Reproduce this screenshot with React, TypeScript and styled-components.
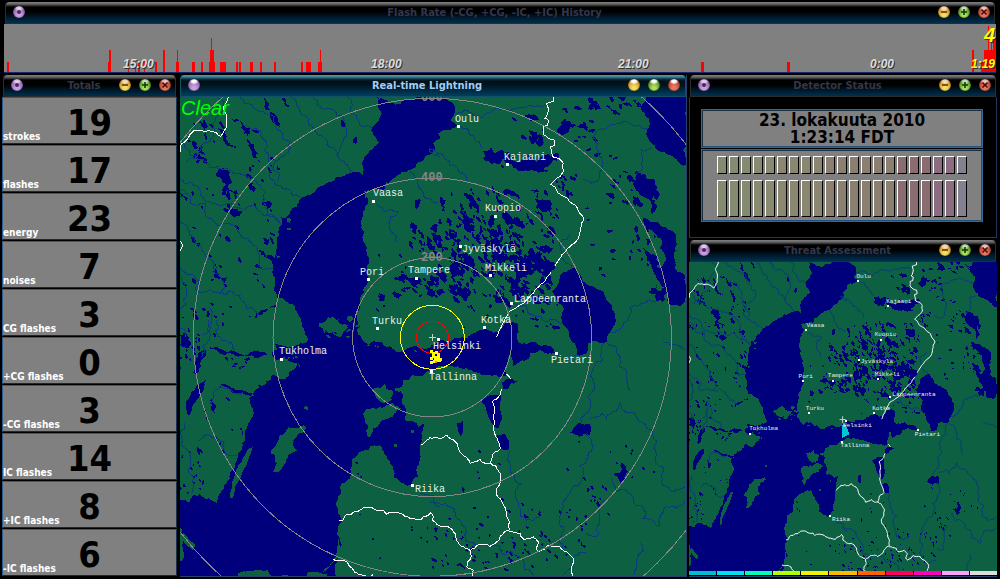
import React from 'react';
import styled, { createGlobalStyle, css } from 'styled-components';

/* ---------- theme values ---------- */
const UI = '"DejaVu Sans Condensed", "DejaVu Sans", sans-serif';
const LAND = '#0d6042';
const WATER = '#00007c';
const RIVER = '#083c7c';
const PANEL = '#808080';

const GlobalStyle = createGlobalStyle`
  * { box-sizing: border-box; }
  html, body { margin: 0; background: #000; }
  body { font-family: ${UI}; color: #000; }
  h1, h2, p, dl, dt, dd { margin: 0; font: inherit; }
`;

/* ---------- map geometry (map space is 1518 x 1437) ---------- */
type Pt = [number, number];
const MAP_W = 1518;
const MAP_H = 1437;

let seed = 20101023;
const rnd = () => {
  seed = (seed + 0x6d2b79f5) | 0;
  let t = Math.imul(seed ^ (seed >>> 15), 1 | seed);
  t = (t + Math.imul(t ^ (t >>> 7), 61 | t)) ^ t;
  return ((t ^ (t >>> 14)) >>> 0) / 4294967296;
};

// The survey sheets: each has its own origin in map space.
const NW: Pt = [0, -66];
const NE: Pt = [750, -66];
const SW: Pt = [0, 669];
const SE: Pt = [750, 669];

const pts = (origin: Pt, text: string): Pt[] =>
  text.trim().split(/\s+/).map((p) => {
    const [x, y] = p.split(',').map(Number);
    return [x + origin[0], y + origin[1]];
  });

const split = (a: Pt, b: Pt, k: number, out: Pt[]) => {
  const dx = b[0] - a[0];
  const dy = b[1] - a[1];
  const len = Math.hypot(dx, dy);
  if (len > 9) {
    const d = (rnd() - 0.5) * k;
    const m: Pt = [(a[0] + b[0]) / 2 - dy * d, (a[1] + b[1]) / 2 + dx * d];
    split(a, m, k, out);
    split(m, b, k, out);
  } else out.push(b);
};

const rough = (line: Pt[], k: number, closed: boolean) => {
  const out: Pt[] = [line[0]];
  for (let i = 1; i < line.length; i++) split(line[i - 1], line[i], k, out);
  if (closed) split(line[line.length - 1], line[0], k, out);
  return 'M' + out.map((p) => `${Math.round(p[0])} ${Math.round(p[1])}`).join('L') + (closed ? 'Z' : '');
};

const area = (o: Pt, t: string, k = 0.5) => rough(pts(o, t), k, true);
const line = (o: Pt, t: string, k = 0.5) => rough(pts(o, t), k, false);

const sea = rough(
  [
    ...pts(NW, '588,60 592,90 605,115 595,140 572,160 585,185 597,205 580,220 560,240 545,265 550,300 530,290 500,298 470,305 440,325 410,340 385,360 360,372 350,395 330,410 318,430 302,425 305,450 298,480 290,510 282,550 278,580 285,620 285,650 292,670 320,680 345,695 355,720 365,745'),
    ...pts(SW, '375,45 385,60 355,75 325,85 300,75 287,70 290,90 275,100 290,120 330,125 355,132 330,155 300,178 275,165 260,190 235,205 208,235 213,260 205,310 195,350 185,390 172,415 160,450 140,490 110,548 75,535 40,525 30,545 0,540 -20,780 480,780 478,710 472,640 473,580 475,530 485,490 510,475 515,440 535,400 560,390 600,375 615,405 640,445 642,475 665,490 690,495 715,470 720,420 720,375 728,330 737,308 715,320 700,305 680,305 678,275 665,240 665,200 670,180 700,165 740,155'),
    ...pts(SE, '10,148 70,140 110,145 150,160 200,165 228,168 230,140 240,105 250,140 265,130 290,120 300,100 330,90 360,100 380,103 370,85 350,75 320,70 290,72 262,60 260,10 235,5 215,25 190,40 155,30 130,40 90,55 30,60'),
    ...pts(SW, '755,75 720,85 650,95 620,80 600,65 545,55 530,30'),
    ...pts(NW, '540,755 530,720 540,690 545,660 565,620 560,580 560,540 550,500 545,450 550,410 565,380 555,360 575,345 610,345 640,310 665,290 700,280 720,260 745,240 765,215'),
    ...pts(NE, '10,205 30,190 25,175 60,165 82,152 62,135 75,110 70,85 40,70 30,55'),
  ],
  0.4,
  true,
);

const bigWater = [
  sea,
  area(NE, '380,635 390,600 410,590 435,580 460,620 490,635 520,650 545,690 557,740 550,755 530,800 510,805 490,797 475,805 470,835 440,838 435,805 415,765 395,740 402,700 380,680 365,650', 0.3),
  area(NE, '650,60 632,100 658,130 655,160 665,205 690,230 720,240 745,262 780,285 780,60', 0.4),
  area(NE, '640,430 680,440 730,470 740,510 735,580 765,620 765,680 750,695 720,690 705,650 680,610 665,570 650,545 640,520 665,540 690,580 706,560 690,520 692,490 660,465', 0.4),
  area(NE, '620,300 650,310 680,340 690,380 672,360 675,410 662,425 650,370 625,350', 0.7),
  area(NE, '160,228 180,218 200,232 222,228 225,250 205,268 180,262', 0.7),
  area(NE, '225,232 270,262 320,262 345,240 385,235 360,270 320,288 260,284 225,265', 0.6),
  area(NE, '265,545 300,535 340,555 350,580 310,595 290,610 260,590', 0.9),
  area(NE, '330,590 370,560 375,580 350,610', 0.7),
  area(NE, '230,600 270,610 300,640 280,660 240,640', 0.9),
  area(NE, '180,500 195,480 215,520 225,560 205,570 190,540', 0.9),
  area(NE, '60,480 85,500 100,560 90,600 70,560', 0.9),
  area(NE, '380,165 420,140 460,142 490,165 450,160 420,155 400,180', 0.8),
  area(NE, '300,345 330,375 365,400 375,435 350,410 320,390', 0.8),
  area(NE, '655,650 710,648 705,670 680,682', 0.9),
  area(SE, '152,240 180,225 213,226 215,300 205,325 190,320 175,290 165,258', 0.15),
  area(SE, '200,345 222,342 238,365 235,390 215,388 203,365', 0.2),
  area(SE, '215,190 230,178 262,185 240,195 235,206 218,203', 0.6),
  area(SE, '420,338 450,308 478,312 480,345 462,340 448,352', 0.3),
  area(SE, '82,310 98,302 100,325 92,348 84,330', 0.3),
  area(SE, '552,465 570,460 572,430 580,430 586,480 572,490', 0.4),
  area(SW, '20,280 18,250 35,215 60,190 78,178 72,200 55,235 38,255 28,285', 0.3),
  area(SW, '85,84 110,80 140,96 175,100 225,92 258,98 262,106 215,106 175,110 120,102', 0.4),
  area(SW, '55,100 75,86 78,100 62,120 50,160 40,158 45,130', 0.4),
  area(SW, '110,202 150,200 195,212 222,226 190,221 150,208', 0.4),
  area(SW, '90,240 99,238 106,280 95,272', 0.5),
  area(SW, '0,45 24,55 32,75 18,85 0,75', 0.6),
  area(NW, '108,272 130,280 145,300 146,340 170,345 180,362 160,355 150,345 142,370 128,340 124,310', 0.7),
  area(NW, '105,565 112,595 140,605 130,628 112,610 100,590', 0.7),
  area(NW, '152,130 190,150 210,175 205,195 225,225 240,262 220,250 200,200 190,165', 0.6),
  area(NW, '200,722 240,710 290,690 285,700 245,720 215,728', 0.6),
  area(NW, '155,400 185,408 178,425 160,425', 0.9),
  area(NW, '245,370 272,395 268,400 245,390', 0.9),
  area(NW, '245,66 270,110 300,160 285,145 255,100', 0.6),
  area(NW, '305,66 335,90 325,96', 0.6),
  area(NW, '115,160 140,185 160,215 150,212 130,185', 0.6),
  area(NW, '20,195 50,205 75,240 60,235 40,215', 0.8),
  area(NW, '30,475 60,505 55,515 35,495', 0.7),
  area(NW, '0,355 25,370 20,378 0,368', 0.7),
  area(NW, '250,490 268,492 262,512 252,506', 0.6),
  area(NW, '482,135 492,142 492,158 484,152', 0.6),
  area(NW, '522,190 532,186 530,205 520,204', 0.6),
  area(NW, '598,645 614,660 610,680 600,670', 0.6),
  area(NW, '704,375 718,372 718,395 708,402', 0.6),
].join('');

const islands = [
  area(SW, '418,10 445,-8 465,-5 480,10 505,25 490,35 475,50 460,35 440,32', 0.9),
  area(SW, '500,-5 515,-12 520,0 510,10', 0.9),
  area(SW, '325,322 360,322 372,316 380,325 352,345 340,360 340,378 350,392 325,405 312,432 295,457 280,455 290,430 285,405 272,403 288,375 300,345', 0.3),
  area(SW, '208,383 218,382 212,400 190,450 175,485 157,535 150,532 158,480 185,425', 0.15),
  area(SW, '555,270 600,262 640,250 665,265 640,290 600,310 580,325 570,352 560,345 565,320 552,290', 0.4),
  area(SW, '575,208 600,205 615,192 640,215 635,240 610,250 590,235', 0.4),
  area(SW, '645,205 662,202 660,218 646,214', 0.4),
  area(SW, '372,260 384,260 384,270 374,268', 0.2),
  area(SW, '642,372 650,372 650,380 642,380', 0.2),
  area(SW, '694,330 702,330 702,338 694,338', 0.2),
  area(SW, '165,780 175,760 210,752 262,750 290,780', 0.2),
  area(SW, '380,780 384,756 415,756 440,762 445,780', 0.2),
  area(SW, '10,640 22,650 45,675 38,692 15,672', 0.2),
  area(SW, '425,758 450,735 468,710 476,655 480,690 495,780 478,760 476,712 460,725 438,752', 0.1),
  area(NW, '552,348 566,345 575,355 568,372 555,368', 0.6),
  area(NW, '288,540 305,545 292,550', 0.3),
  area(NW, '322,430 335,432 330,445 322,440', 0.3),
  area(NW, '322,458 332,458 332,464 322,464', 0.3),
].join('');

/* cluster: x0, y0, x1, y1, count, min size, max size, tilt in degrees */
type Cluster = [Pt, number, number, number, number, number, number, number, number];

const blobs = (clusters: Cluster[]) => {
  let d = '';
  for (const [o, x0, y0, x1, y1, n, s0, s1, tilt] of clusters) {
    for (let i = 0; i < n; i++) {
      const cx = o[0] + x0 + rnd() * (x1 - x0);
      const cy = o[1] + y0 + rnd() * (y1 - y0);
      const r = (s0 + rnd() * rnd() * (s1 - s0)) / 2;
      const a0 = ((tilt + (rnd() - 0.5) * 60) * Math.PI) / 180;
      const flat = 0.25 + rnd() * 0.35;
      const ring: Pt[] = [];
      for (let k = 0; k < 8; k++) {
        const a = (k / 8) * Math.PI * 2;
        const rr = r * (0.55 + rnd() * 0.6);
        const px = Math.cos(a) * rr;
        const py = Math.sin(a) * Math.max(rr * flat, 3);
        ring.push([cx + px * Math.cos(a0) - py * Math.sin(a0), cy + px * Math.sin(a0) + py * Math.cos(a0)]);
      }
      d += rough(ring, 0.9, true);
    }
  }
  return d;
};

const lakes = blobs([
  [NE, 30, 340, 210, 500, 46, 12, 60, 65],
  [NE, 90, 430, 260, 560, 60, 12, 66, 75],
  [NE, 60, 540, 360, 690, 112, 12, 62, 60],
  [NE, 200, 460, 370, 560, 28, 12, 50, 50],
  [NE, 0, 470, 100, 660, 34, 12, 50, 40],
  [NW, 690, 450, 780, 540, 22, 10, 44, 60],
  [NW, 640, 590, 780, 665, 28, 10, 50, 20],
  [NE, 190, 340, 400, 470, 20, 10, 60, 50],
  [NE, 380, 300, 440, 370, 14, 10, 44, 60],
  [NE, 540, 290, 630, 400, 20, 10, 60, 40],
  [NE, 600, 450, 680, 570, 20, 10, 50, 70],
  [NE, 400, 80, 500, 200, 12, 10, 50, 10],
  [NE, 450, 66, 640, 120, 14, 10, 60, 40],
  [NE, 250, 85, 345, 205, 12, 10, 60, 50],
  [NE, 440, 220, 560, 250, 5, 10, 44, 0],
  [NE, 470, 400, 560, 620, 9, 10, 40, 0],
  [NE, 230, 640, 420, 760, 14, 8, 34, 20],
  [NE, 100, 690, 200, 760, 8, 8, 24, 60],
  [NE, 170, 240, 370, 290, 12, 8, 40, 20],
  [NW, 570, 540, 680, 720, 8, 8, 28, 60],
  [NW, 0, 130, 260, 400, 28, 10, 54, 55],
  [NW, 0, 400, 280, 720, 28, 10, 40, 40],
  [NW, 240, 225, 310, 290, 5, 10, 40, 60],
  [SW, 0, -20, 160, 60, 14, 8, 36, 60],
  [SW, 0, 60, 60, 170, 14, 8, 30, 60],
  [SW, 110, 110, 270, 200, 12, 8, 34, 20],
  [SW, 70, 230, 200, 400, 9, 8, 24, 60],
  [SW, 0, 390, 70, 530, 22, 8, 26, 80],
  [SW, 520, 410, 580, 470, 3, 8, 24, 60],
  [SW, 530, 570, 780, 760, 8, 8, 16, 60],
  [SE, 0, 560, 230, 760, 44, 8, 28, 50],
  [SE, 230, 540, 380, 740, 34, 8, 24, 50],
  [SE, 380, 570, 470, 720, 14, 8, 30, 60],
  [SE, 470, 490, 540, 590, 12, 8, 28, 60],
  [SE, 300, 360, 700, 480, 12, 8, 22, 60],
  [SE, 0, 380, 220, 560, 8, 8, 24, 60],
]);

const skerries = blobs([
  [SW, 430, 10, 560, 55, 22, 8, 24, 20],
  [SW, 300, 85, 360, 160, 12, 7, 16, 40],
  [SW, 535, 40, 720, 95, 16, 7, 18, 10],
  [NE, 120, 560, 340, 680, 16, 7, 18, 60],
]);

const rivers = [
  line(NW, '330,66 350,90 380,125 400,160 440,195 470,230 480,255 520,290'),
  line(NW, '400,66 440,100 470,120 485,205 470,240'),
  line(NW, '500,66 510,105 540,150 575,165'),
  line(NW, '180,66 215,90 240,110 300,165 330,200 320,235 285,260 270,290 290,330 330,345 360,370'),
  line(NW, '200,150 260,200 265,250 300,300 290,320'),
  line(NW, '0,190 30,240 80,260 140,280 190,300 240,330 250,380 260,420 300,445'),
  line(NW, '0,310 40,330 70,370 130,390 180,400 240,410 302,450'),
  line(NW, '0,345 30,380 75,385 85,430 120,450 160,450 200,490 230,520 235,570 280,580'),
  line(NW, '0,440 40,490 70,530 100,560 130,620 125,655'),
  line(NW, '0,575 50,650 120,655 180,660 200,700 235,720'),
  line(NW, '0,600 20,650 15,780'),
  line(NW, '90,700 95,740 65,780'),
  line(NW, '20,260 90,200 130,90 110,66'),
  line(NW, '590,385 655,410 630,450 650,500'),
  line(NW, '690,290 720,340 755,375 775,385'),
  line(NW, '750,220 780,245'),
  line(NE, '85,155 130,180 160,220'),
  line(NE, '75,115 130,120 180,115 240,110 300,90 350,85'),
  line(NE, '0,225 50,255 100,295 110,320'),
  line(NE, '490,190 530,160 555,148 650,162'),
  line(NE, '490,190 505,240 510,300 485,325 460,312'),
  line(NE, '665,220 635,225 635,270 620,300'),
  line(NE, '420,478 390,500 395,530 425,580'),
  line(NE, '540,770 600,700 640,685 680,680'),
  line(NE, '250,685 300,720 350,740 400,745'),
  line(SE, '520,70 520,120 490,180 480,250 452,295 455,310'),
  line(SE, '530,70 570,110 590,160 600,212'),
  line(SE, '480,295 515,280 530,300 570,250 620,290 665,330 675,420 695,470 720,510 765,500'),
  line(SE, '470,340 475,400 455,480 420,520 400,560 400,620 385,660 400,690'),
  line(SE, '238,390 240,450 275,490 270,570 290,600 330,590'),
  line(SE, '545,475 560,515 600,520 640,570 640,595 690,615 710,560 765,545'),
  line(SE, '525,540 510,600 500,650 470,640'),
  line(SE, '0,545 60,560 90,600 105,660 160,672 210,680 220,705 280,720 310,765'),
  line(SE, '700,65 740,75 765,90'),
  line(SE, '630,670 640,690 620,720 615,765'),
  line(SE, '470,700 430,720 400,765'),
  line(SE, '380,100 410,120 440,103'),
  line(SW, '720,520 780,560'),
  line(SW, '55,362 70,345 120,360 135,395 170,405'),
  line(SW, '90,250 100,215 140,205 190,215'),
  line(SW, '110,0 125,60 165,90'),
  line(SW, '15,310 5,370 30,420 35,520'),
  line(SW, '65,110 90,60 85,0'),
].join('');

const borders = [
  line(NE, '370,60 370,80 350,85 355,100 345,130 355,135 352,152 340,155 342,180 355,190 372,195 375,210 362,215 368,245 385,250 400,265 400,290 390,305 362,328 385,355 415,375 440,395 462,432 450,465 445,490 420,515 405,532 375,572', 0.2),
  line(NE, '362,592 330,630 310,655 270,690 230,725 215,755 200,785', 0.2),
  line(SE, '230,163 242,177', 0.2),
  line(SE, '215,208 210,225 187,245 192,300 190,325 205,365 212,385 190,400 180,430', 0.2),
  line(SW, '725,375 735,365 750,352 785,355 800,345 835,385 870,430 900,418 915,430 935,432 963,465 960,490 950,525 968,550 980,590 987,630 945,670 930,680 895,675 870,692 860,740 880,750 875,775', 0.3),
  line(SW, '478,603 490,600 500,583 550,563 600,573 612,572 620,583 660,580 690,595 720,600 730,590 752,578 760,605 775,616 800,618 825,640 845,680 870,692', 0.3),
  line(SE, '237,635 270,640 280,657 310,650 325,665 318,685 328,695 355,675 390,680 410,695 428,712 425,740 430,775', 0.3),
  line(SW, '458,717 490,720 510,740 545,765 580,763', 0.3),
  line(NW, '145,66 130,95 140,130 138,160 122,185 90,168 45,165 20,195 2,212 0,230', 0.2),
  line(NW, '0,497 8,512 0,528', 0.1),
].join('');

interface City { name: string; dot: Pt; label: Pt }
// Pixel positions on a 506 x 479 sheet; labels give left edge and baseline.
const cities: City[] = [
  { name: 'Oulu', dot: [278, 29], label: [275, 26] },
  { name: 'Kajaani', dot: [327, 67], label: [324, 64] },
  { name: 'Vaasa', dot: [193, 104], label: [193, 100] },
  { name: 'Kuopio', dot: [315, 119], label: [305, 115] },
  { name: 'Jyväskylä', dot: [280, 149], label: [282, 156] },
  { name: 'Tampere', dot: [236, 181], label: [228, 177] },
  { name: 'Mikkeli', dot: [310, 178], label: [305, 175] },
  { name: 'Lappeenranta', dot: [331, 206], label: [334, 206] },
  { name: 'Pori', dot: [188, 182], label: [180, 179] },
  { name: 'Turku', dot: [197, 231], label: [192, 228] },
  { name: 'Kotka', dot: [304, 230], label: [301, 227] },
  { name: 'Tukholma', dot: [101, 262], label: [99, 258] },
  { name: 'Helsinki', dot: [258, 242], label: [253, 253] },
  { name: 'Tallinna', dot: [251, 274], label: [249, 284] },
  { name: 'Pietari', dot: [376, 256], label: [371, 267] },
  { name: 'Riika', dot: [232, 388], label: [235, 396] },
];

const strikes: Pt[] = [
  [751, 760], [757, 766], [766, 763], [770, 768], [755, 774], [763, 776], [771, 778], [761, 783], [767, 786],
  [751, 791], [758, 789], [774, 787], [751, 779], [776, 783],
];

const MapBox = styled.div`
  position: relative;
  flex: 1 1 0;
  min-height: 0;
  overflow: hidden;
  background: ${LAND};
`;

const Chart = styled.svg`
  position: absolute;
  inset: 0;
  width: 100%;
  height: 100%;
  display: block;
  shape-rendering: crispEdges;

  path, circle { vector-effect: non-scaling-stroke; }
`;

const MapLabel = styled.span<{ $small?: boolean }>`
  position: absolute;
  color: #e8f0e8;
  font: ${(p) => (p.$small ? 6 : 10)}px/1 'Liberation Mono', monospace;
  margin-top: ${(p) => (p.$small ? -5 : -8)}px;
  white-space: pre;
`;

const Dot = styled.i<{ $small?: boolean }>`
  position: absolute;
  width: ${(p) => (p.$small ? 2 : 3)}px;
  height: ${(p) => (p.$small ? 2 : 3)}px;
  margin: -1px 0 0 -1px;
  background: #fff;
`;

const RangeLabel = styled.span`
  position: absolute;
  margin-top: -10px;
  color: #868686;
  font: bold 12px/1 'Liberation Mono', monospace;
`;

const Warning = styled.strong`
  position: absolute;
  left: 1px;
  top: 1px;
  color: #00ff00;
  font: italic 500 20px/20px 'Liberation Sans', Arial, sans-serif;
`;

const pct = (v: number, of: number) => `${(v / of) * 100}%`;

function LightningMap({ small }: { small?: boolean }) {
  return (
    <>
      <Chart viewBox={`0 0 ${MAP_W} ${MAP_H}`} preserveAspectRatio="none" role="img" aria-label="Map of the Baltic region">
        <path d={bigWater} fill={WATER} />
        <path d={islands} fill={LAND} />
        <path d={lakes} fill={WATER} />
        <path d={skerries} fill={LAND} />
        <path d={rivers} fill="none" stroke={RIVER} strokeWidth="1" />
        <path d={borders} fill="none" stroke="#fff" strokeWidth="1" />
        {small ? (
          <path d="M756 744L770 742L782 768L790 790L756 804Z" fill="#00c8d0" />
        ) : (
          <>
            <g fill="none" stroke="#868686" strokeWidth="1">
              {[1, 2, 3, 4].map((n) => <circle key={n} cx="757" cy="721" r={n * 239} />)}
            </g>
            <circle cx="757" cy="721" r="48" fill="none" stroke="#f00" strokeWidth="1" />
            <circle cx="757" cy="721" r="96" fill="none" stroke="#ff0" strokeWidth="1" />
            {strikes.map(([x, y]) => <rect key={`${x}-${y}`} x={x} y={y} width="9" height="9" fill="#ff0" />)}
            <rect x="764" y="793" width="6" height="6" fill="#ff9000" />
          </>
        )}
        <path d={small ? 'M742 721H772M757 706V736' : 'M747 721H768M757 711V732'} stroke="#c8d0c8" strokeWidth="1" />
      </Chart>
      {!small && [200, 400, 600].map((km, i) => (
        <RangeLabel key={km} style={{ left: pct(241, 506), top: pct(165 - i * 80, 479) }}>{km}</RangeLabel>
      ))}
      {cities.map((c) => (
        <React.Fragment key={c.name}>
          <Dot $small={small} style={{ left: pct(c.dot[0], 506), top: pct(c.dot[1], 479) }} />
          <MapLabel $small={small} style={{ left: pct(c.label[0], 506), top: pct(c.label[1], 479) }}>{c.name}</MapLabel>
        </React.Fragment>
      ))}
    </>
  );
}

/* ---------- window frame ---------- */
const Frame = styled.section`
  display: flex;
  flex-direction: column;
  min-width: 0;
`;

const TitleBar = styled.header<{ $active?: boolean }>`
  display: grid;
  grid-template-columns: 42px 1fr 56px;
  align-items: center;
  height: 22px;
  margin: 0 1px;
  padding: 0 4px 2px 7px;
  border: 1px solid #2c2c2c;
  border-top: 0;
  border-radius: 4px 4px 0 0;
  background: linear-gradient(#808080 0, #666 2px, #222 4px, #000 5px, #000 10px, #00182a 15px, #002c48 20px);
  color: #343648;

  ${(p) => p.$active && css`
    margin: 0;
    padding-right: 5px;
    border-color: #125068;
    background: linear-gradient(#5c98ac 0, #3c7c92 2px, #0c3444 4px, #001018 6px, #00141e 10px, #002840 15px, #003c5c 20px);
    color: #a4ccf4;
  `}
`;

const TitleText = styled.h2`
  font: bold 11px/14px ${UI};
  text-align: center;
  white-space: nowrap;
  padding-top: 3px;
`;

const Buttons = styled.div`
  display: flex;
  justify-content: flex-end;
  gap: 8px;
`;

const tones = {
  violet: ['#8a54ac', '#c8a0dc', '#4c2468'],
  amber: ['#c87818', '#f0e060', '#6c3400'],
  green: ['#3c7c1c', '#b0e058', '#0c4004'],
  red: ['#a83420', '#e87860', '#500c08'],
};

const Orb = styled.button<{ $tone: keyof typeof tones; $active?: boolean }>`
  width: 12px;
  height: 12px;
  padding: 0;
  border: 0;
  border-radius: 50%;
  display: grid;
  place-items: center;
  background:
    radial-gradient(ellipse 5px 4px at 50% 15%, ${(p) => (p.$active ? '#fff' : '#ffffffb0')} 40%, transparent),
    radial-gradient(circle at 50% 75%, ${(p) => tones[p.$tone][1]} 15%, ${(p) => tones[p.$tone][0]} 75%);
  box-shadow: inset 0 0 1px #000;

  svg { width: 8px; height: 8px; display: block; }
`;

const glyphs = { menu: '', minimize: 'M1 4H7', maximize: 'M1 4H7M4 1V7', close: 'M1.5 1.5L6.5 6.5M6.5 1.5L1.5 6.5' };

function TitleButton({ kind, tone, active }: { kind: keyof typeof glyphs; tone: keyof typeof tones; active?: boolean }) {
  return (
    <Orb type="button" aria-label={kind} $tone={tone} $active={active}>
      {!active && (
        <svg viewBox="0 0 8 8" aria-hidden="true">
          {kind === 'menu'
            ? <circle cx="4" cy="4" r="2" fill={tones[tone][2]} />
            : <path d={glyphs[kind]} stroke={tones[tone][2]} strokeWidth="1.6" />}
        </svg>
      )}
    </Orb>
  );
}

function Window({ title, active, className, children }: { title: string; active?: boolean; className?: string; children: React.ReactNode }) {
  return (
    <Frame className={className}>
      <TitleBar $active={active}>
        <TitleButton kind="menu" tone="violet" active={active} />
        <TitleText>{title}</TitleText>
        <Buttons>
          <TitleButton kind="minimize" tone="amber" active={active} />
          <TitleButton kind="maximize" tone="green" active={active} />
          <TitleButton kind="close" tone="red" active={active} />
        </Buttons>
      </TitleBar>
      {children}
    </Frame>
  );
}

/* ---------- page ---------- */
const Desktop = styled.main`
  padding: 2px 3px 2px 2px;
  display: flex;
  flex-direction: column;
  gap: 2px;
`;

const HistoryWindow = styled(Window)`
  margin: 0 1px 0 2px;
`;

const Columns = styled.div`
  display: grid;
  grid-template-columns: 175px minmax(0, 1fr) 308px;
  column-gap: 2px;
`;

const MainWindow = styled(Window)`
  margin-left: 1px;
  border-right: 1px solid #24406c;
  border-bottom: 1px solid #24406c;
`;

const RightColumn = styled.div`
  display: flex;
  flex-direction: column;
  gap: 2px;
`;

const ThreatWindow = styled(Window)`
  flex: 1;
  border-bottom: 1px solid #24406c;
`;

/* ---------- flash rate history ---------- */
const RateBox = styled.div`
  position: relative;
  height: 49px;
  background: ${PANEL};
  border-bottom: 1px solid #182868;
`;

const TimeLabel = styled.time<{ $now?: boolean }>`
  position: absolute;
  bottom: 1px;
  font: italic bold 12px/14px 'Liberation Sans', Arial, sans-serif;
  color: ${(p) => (p.$now ? '#ff0' : '#dcdcdc')};
  text-shadow: 1px 1px 0 #303030;
`;

const RateValue = styled.strong`
  position: absolute;
  right: 1px;
  top: 1px;
  color: #ff0;
  font: italic bold 20px/20px 'Liberation Sans', Arial, sans-serif;
  text-shadow: 1px 1px 0 #303030;
`;

// x position, width and flash count
const rates: [number, number, number][] = [
  [3, 2, 1], [104, 1, 1], [105, 2, 2], [124, 1, 1], [131, 1, 1], [134, 2, 1], [140, 1, 1], [151, 2, 1],
  [159, 2, 2], [172, 3, 1], [173, 1, 2], [188, 3, 1], [197, 2, 1], [205, 6, 1], [206, 4, 2], [207, 1, 3],
  [216, 6, 1], [232, 2, 1], [235, 2, 1], [246, 3, 1], [256, 2, 1], [270, 2, 1], [297, 2, 1], [302, 5, 1],
  [314, 4, 1], [316, 1, 2], [697, 3, 1], [783, 3, 1], [968, 2, 2], [977, 15, 1], [980, 12, 2], [984, 1, 4],
  [987, 1, 3], [989, 3, 3],
];

const times: [string, number][] = [['15:00', 119], ['18:00', 367], ['21:00', 614], ['0:00', 866], ['1:19', 967]];

/* ---------- totals ---------- */
const TotalsList = styled.dl`
  display: flex;
  flex-direction: column;
`;

const TotalCell = styled.div`
  display: grid;
  height: 48px;
  border-bottom: 1px solid #000;
`;

const TotalFace = styled.div`
  display: grid;
  background: ${PANEL};
  border: 1px solid #2c5c90;
  border-right-color: #143450;
  border-bottom-color: #102c44;
  grid-template-areas: 'cell';
`;

const TotalName = styled.dt`
  grid-area: cell;
  place-self: end start;
  color: #fff;
  font: bold 10px/12px ${UI};
`;

const TotalValue = styled.dd`
  grid-area: cell;
  place-self: start center;
  font: bold 36px/50px ${UI};
  height: 45px;
`;

const totals: [string, number][] = [
  ['strokes', 19], ['flashes', 17], ['energy', 23], ['noises', 7], ['CG flashes', 3],
  ['+CG flashes', 0], ['-CG flashes', 3], ['IC flashes', 14], ['+IC flashes', 8], ['-IC flashes', 6],
];

/* ---------- detector ---------- */
const DetectorBox = styled.div`
  display: flex;
  flex-direction: column;
  gap: 1px;
  padding: 12px 13px 15px 11px;
  border: 1px solid #24345c;
  border-top: 0;
`;

const Sunken = styled.div`
  background: ${PANEL};
  border: 1px solid #34689c;
  box-shadow: inset 1px 1px 0 #183048, inset -1px -1px 0 #24507c;
`;

const Clock = styled(Sunken)`
  padding: 2px 0 1px;
  text-align: center;
  font: bold 17px/17px ${UI};
`;

const Meters = styled(Sunken)`
  padding: 6px 15px 4px;
  display: grid;
  row-gap: 6px;
`;

const MeterRow = styled.div<{ $tall?: boolean }>`
  display: grid;
  grid-template-columns: repeat(21, 1fr);
  column-gap: 2px;
  height: ${(p) => (p.$tall ? 37 : 18)}px;
`;

const Lamp = styled.i<{ $tint: string }>`
  background: ${(p) => p.$tint};
  border: 1px solid #fff;
  border-right-color: #000;
  border-bottom-color: #000;
`;

const tints = [
  ...Array(3).fill('#858b70'), ...Array(2).fill('#8a8a70'), ...Array(4).fill('#8b8670'), ...Array(6).fill('#8b8070'),
  ...Array(3).fill('#8b6c70'), ...Array(2).fill('#8b6c80'), '#858090',
];

/* ---------- threat scale ---------- */
const Scale = styled.div`
  position: absolute;
  inset: auto 0 0 0;
  display: grid;
  grid-template-columns: repeat(11, 1fr);
  gap: 1px;
  height: 5px;
  padding-bottom: 1px;
  background: #000;
`;

const Swatch = styled.i<{ $tint: string }>`
  background: ${(p) => p.$tint};
`;

const scale = ['#00bcc4', '#00e0e8', '#00ffb4', '#b4ff00', '#f0f000', '#ffb800', '#ff6000', '#ff0060', '#ff00b8', '#ffa0ff', '#dcdcdc'];

export default function App() {
  return (
    <>
      <GlobalStyle />
      <Desktop>
        <HistoryWindow title="Flash Rate (-CG, +CG, -IC, +IC) History">
          <RateBox>
            <Chart viewBox="0 0 992 48" preserveAspectRatio="none" role="img" aria-label="Flash rate history">
              {rates.map(([x, w, n]) => {
                const h = n * 12 - 2;
                return <rect key={`${x}-${n}`} x={x} y={48 - h} width={w} height={h} fill="#f00" />;
              })}
            </Chart>
            {times.map(([t, x]) => (
              <TimeLabel key={t} $now={t === '1:19'} style={{ left: pct(x, 992) }}>{t}</TimeLabel>
            ))}
            <RateValue>4</RateValue>
          </RateBox>
        </HistoryWindow>
        <Columns>
          <Window title="Totals">
            <TotalsList>
              {totals.map(([name, value]) => (
                <TotalCell key={name}>
                  <TotalFace>
                    <TotalName>{name}</TotalName>
                    <TotalValue>{value}</TotalValue>
                  </TotalFace>
                </TotalCell>
              ))}
            </TotalsList>
          </Window>
          <MainWindow title="Real-time Lightning" active>
            <MapBox>
              <LightningMap />
              <Warning>Clear</Warning>
            </MapBox>
          </MainWindow>
          <RightColumn>
            <Window title="Detector Status">
              <DetectorBox>
                <Clock>
                  <p>23. lokakuuta 2010</p>
                  <p>1:23:14 FDT</p>
                </Clock>
                <Meters>
                  <MeterRow>{tints.map((t, i) => <Lamp key={i} $tint={t} />)}</MeterRow>
                  <MeterRow $tall>{tints.map((t, i) => <Lamp key={i} $tint={t} />)}</MeterRow>
                </Meters>
              </DetectorBox>
            </Window>
            <ThreatWindow title="Threat Assessment">
              <MapBox>
                <LightningMap small />
                <Scale>{scale.map((t) => <Swatch key={t} $tint={t} />)}</Scale>
              </MapBox>
            </ThreatWindow>
          </RightColumn>
        </Columns>
      </Desktop>
    </>
  );
}
